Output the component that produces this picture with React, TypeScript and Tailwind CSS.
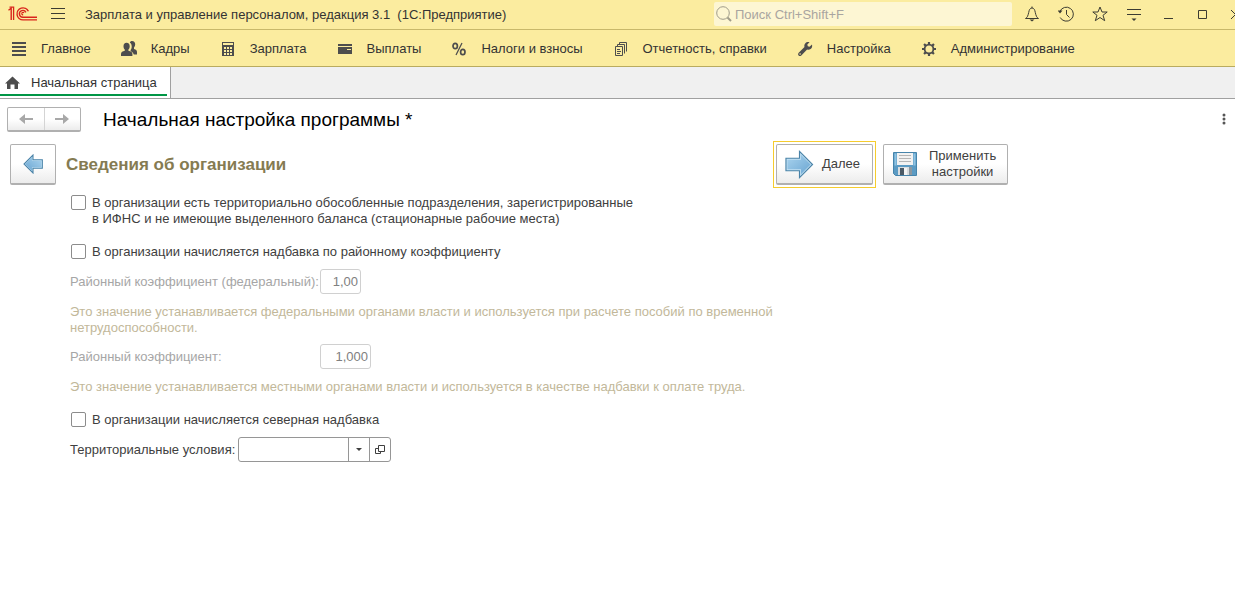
import { useState } from 'react';
import type { ReactNode } from 'react';

const ink = '#4d4d4d';

function Logo() {
  return (
    <svg width="30" height="16" viewBox="0 0 30 16" fill="none" stroke="#d9241c" strokeWidth="1.4">
      <path d="M0.5 4.2 L3.2 2.2 V14" />
      <path d="M1.5 1.2 H5.6 V14" strokeWidth="1.3" />
      <path d="M20.4 5.2 A6 6 0 1 0 15 13.9 H29" />
      <path d="M17.9 6.4 A3.4 3.4 0 1 0 15 11.2 H29" />
      <path d="M16 7 A1.2 1.2 0 1 0 15.2 8.8" strokeWidth="1.1" />
    </svg>
  );
}

function NavIcon({ children }: { children: ReactNode }) {
  return (
    <svg width="16" height="16" viewBox="0 0 16 16" fill={ink} className="shrink-0">
      {children}
    </svg>
  );
}

const sections = [
  {
    title: 'Главное',
    icon: <path d="M1 1h14v2H1zM1 5h14v2H1zM1 9h14v2H1zM1 13h14v2H1z" />,
  },
  {
    title: 'Кадры',
    icon: (
      <>
        <path d="M11 0c2.100 0 3.200 1.300 3.200 3.200 0 1.300-.4 2.300-1.200 3.200v1.600c1.900.6 3 1.300 3 3v2.500h-3.200c-.4-1.700-1.600-2.700-3.200-3.300V9c.8-1 1.100-2.200 1.100-3.600 0-1.800-.7-3.100-1.900-3.900C9.300.5 10 0 11 0z" />
        <path d="M5.600 1.800c2.100 0 3.100 1.400 3.100 3.400 0 1.500-.5 2.700-1.300 3.400v1.200c2.300.6 4 1.300 4 3.200v2H0v-2c0-1.900 1.600-2.600 3.800-3.200V8.600C3 7.900 2.500 6.700 2.500 5.200c0-2 1-3.400 3.100-3.400z" />
      </>
    ),
  },
  {
    title: 'Зарплата',
    icon: (
      <path
        fillRule="evenodd"
        d="M2 1h12v14H2zM3 2v2h10V2zM4 6v2h2V6zM7 6v2h2V6zM10 6v2h2V6zM4 9v2h2V9zM7 9v2h2V9zM10 9v2h2V9zM4 12v2h2v-2zM7 12v2h2v-2zM10 12v2h2v-2z"
      />
    ),
  },
  {
    title: 'Выплаты',
    icon: <path fillRule="evenodd" d="M1 3h14v2H1zM1 6h14v7H1zM10 8v1h4V8z" />,
  },
  {
    title: 'Налоги и взносы',
    icon: (
      <g fill="none" stroke={ink} strokeWidth="1.7">
        <ellipse cx="4.200" cy="5" rx="2.200" ry="2.700" />
        <ellipse cx="11.800" cy="11" rx="2.200" ry="2.700" />
        <path d="M11 2 5 14" strokeWidth="1.300" />
      </g>
    ),
  },
  {
    title: 'Отчетность, справки',
    icon: (
      <g fill="none" stroke={ink}>
        <path d="M2.500 5.500h7v9h-7zM4.500 5V3.500h7v9M6.500 3V1.500h7v9M4 8.500h3M4 10.500h4M4 12.500h3" />
      </g>
    ),
  },
  {
    title: 'Настройка',
    icon: (
      <path
        fillRule="evenodd"
        d="M12.500 1.200 10.300 3.600l.5 1.700 1.700.5L15 3.400c.5 2-.1 3.700-1.400 4.600-1.100.8-2.400.9-3.500.5L4.300 14.400c-.8.8-2 .8-2.700.1s-.7-1.900.1-2.700L7.500 6c-.4-1.200-.2-2.600.7-3.600 1.100-1.300 2.700-1.700 4.300-1.200zM3.100 12.200a.8.8 0 1 0 .01 1.600.8.8 0 0 0 0-1.600z"
      />
    ),
  },
  {
    title: 'Администрирование',
    icon: (
      <g fill="none" stroke={ink}>
        <circle cx="8" cy="8" r="4.400" strokeWidth="1.800" />
        <path
          strokeWidth="2.200"
          d="M8 1v2.500M8 12.500V15M1 8h2.500M12.500 8H15M3.050 3.050l1.800 1.800M11.150 11.150l1.800 1.800M3.050 12.950l1.800-1.800M11.150 4.850l1.800-1.800"
        />
      </g>
    ),
  },
];

function ToolButton({ label, children }: { label: string; children: ReactNode }) {
  return (
    <button type="button" aria-label={label} className="flex h-4 w-4 items-center justify-center">
      <svg width="16" height="16" viewBox="0 0 16 16" fill="none" stroke="#3c3c32" className="shrink-0">
        {children}
      </svg>
    </button>
  );
}

function TitleBar() {
  return (
    <header className="flex h-[30px] items-center overflow-hidden border-b border-[#c8b86a] bg-[#fbec9f] pb-px pl-2 text-[#333333]">
      <Logo />
      <button type="button" aria-label="Меню" className="ml-3 flex w-4 justify-center">
        <svg width="14" height="12" viewBox="0 0 14 12" stroke="#3c3c32">
          <path d="M0 .5h14M0 5.500h14M0 10.500h14" />
        </svg>
      </button>
      <h1 className="ml-[19px] flex-1 pt-px whitespace-pre">
        {'Зарплата и управление персоналом, редакция 3.1  (1С:Предприятие)'}
      </h1>
      <label className="flex h-6 w-[298px] shrink-0 items-center rounded-xs bg-[#fdf6d3] pl-[2px]">
        <svg width="16" height="16" viewBox="0 0 16 16" fill="none" stroke="#a09c8a" className="shrink-0">
          <circle cx="7" cy="7" r="6.300" />
          <path d="M11.500 11.500 15 15" strokeWidth="2" />
        </svg>
        <input
          type="search"
          aria-label="Поиск"
          placeholder="Поиск Ctrl+Shift+F"
          className="ml-[3px] w-full bg-transparent pt-px outline-none placeholder:text-[#a9a5a0]"
        />
      </label>
      <div className="-mr-[9px] ml-3 flex shrink-0 items-center gap-[18px]">
        <ToolButton label="Уведомления">
          <path d="M8 .5V2M1.500 12.500h13c-2-1-2.500-3-3.200-6C10.800 3.800 10 2 8 2S5.200 3.800 4.700 6.500c-.7 3-1.200 5-3.200 6z" />
          <path d="M5.500 13.500h5L8 15.500z" fill="#3c3c32" stroke="none" />
        </ToolButton>
        <ToolButton label="История">
          <path d="M1.900 5.500A7 7 0 1 1 2.200 11.500M8.500 4v4.500l3 3" />
          <path d="M-.5 4.500h5L2 7.500z" fill="#3c3c32" stroke="none" />
        </ToolButton>
        <ToolButton label="Избранное">
          <path d="M8 1l2 5h5.200l-4.200 3.300 1.700 5.400L8 11.500l-4.700 3.200L5 9.300.8 6H6z" />
        </ToolButton>
        <ToolButton label="Настройки окна">
          <path d="M1 3.500h14M1 8.500h14" />
          <path d="M5.500 12.500h5L8 15z" fill="#3c3c32" stroke="none" />
        </ToolButton>
        <ToolButton label="Свернуть">
          <path d="M4 12.500h9" />
        </ToolButton>
        <ToolButton label="Развернуть">
          <path d="M4.500 4.500h8v8h-8z" />
        </ToolButton>
        <ToolButton label="Закрыть">
          <path d="M3 4l9 9M12 4l-9 9" />
        </ToolButton>
      </div>
    </header>
  );
}

function Sections() {
  return (
    <nav className="flex h-[37px] items-center gap-[30px] overflow-hidden border-b border-[#b9ab5f] bg-[#fbec9f] pt-px pl-[11px] text-[#333333]">
      {sections.map((s) => (
        <a key={s.title} href="#" className="flex shrink-0 items-center gap-[14px]">
          <NavIcon>{s.icon}</NavIcon>
          {s.title}
        </a>
      ))}
    </nav>
  );
}

function Tabs() {
  return (
    <div className="flex h-8 border-b border-[#a0a0a0] bg-[#f0f0f0]">
      <div className="border-r border-[#a0a0a0] bg-white pr-[3px]">
        <a href="#" className="flex h-[29px] items-center gap-[10px] border-b-2 border-[#009646] pt-1 pr-[10px] pl-[5px] text-[#333333]">
          <svg width="16" height="16" viewBox="0 0 16 16" fill={ink}>
            <path d="M7.500 1.500 15 8.500h-2V14H9.500V9.500h-4V14H2V8.500H0z" />
          </svg>
          Начальная страница
        </a>
      </div>
    </div>
  );
}

const raised = 'rounded-xs border border-b-2 border-[#b0b0b0] bg-linear-to-b from-white from-50% to-[#ececec]';

function BlueArrow({ size, flip }: { size: number; flip?: boolean }) {
  return (
    <svg width={size} height={size} viewBox="0 0 30 30" className={flip ? 'shrink-0 -scale-x-100' : 'shrink-0'}>
      <defs>
        <linearGradient id="arrow" x1="0" y1="0" x2="1" y2="1">
          <stop offset="0" stopColor="#a9d3ee" />
          <stop offset="1" stopColor="#6ba6d2" />
        </linearGradient>
      </defs>
      <path d="M1 8.500h14V1.500L28.500 15 15 28.500v-7H1z" fill="#c4e2f4" stroke="#4a83a8" strokeWidth={flip ? 1.6 : 1.2} />
      <path d="M2.500 10h14V5l10 10-10 10v-5h-14z" fill="url(#arrow)" />
    </svg>
  );
}

function Floppy() {
  return (
    <svg width="24" height="24" viewBox="0 0 24 24" className="shrink-0">
      <path d="M.5.500h23v23H2.500l-2-2z" fill="#5b9bc4" stroke="#4684ab" />
      <path d="M1.500 1.500h2v12h-2zM20.500 1.500h2v12h-2z" fill="#8fc3e2" />
      <path d="M4 1h16v12H4z" fill="#f2f2f2" />
      <path d="M6 3.500h12M6 6.500h12M6 9.500h12" stroke="#b5b5b5" />
      <path d="M5 15h14v8H5z" fill="#d9dde0" />
      <path d="M7 16h4v7H7z" fill="#4c5a66" />
      <path d="M11 16h3v7h-3z" fill="#f4f4f4" />
      <path d="M16 15h3v8h-3z" fill="#8c979f" />
    </svg>
  );
}

function Check({ id, children }: { id: string; children: ReactNode }) {
  return (
    <div className="flex items-start gap-[6px] pl-px">
      <input
        id={id}
        type="checkbox"
        className="h-[15px] w-[15px] shrink-0 appearance-none rounded-xs border border-[#8c8c8c] bg-white checked:bg-[#8c8c8c]"
      />
      <label htmlFor={id}>{children}</label>
    </div>
  );
}

export default function App() {
  const [territory, setTerritory] = useState('');

  return (
    <div className="min-h-screen bg-white font-['Liberation_Sans',Arial,sans-serif] text-[13px] leading-4 text-[#404040]">
      <TitleBar />
      <Sections />
      <Tabs />

      {/* Form header */}
      <div className="flex items-center pt-2 pr-[7px] pl-[7px]">
        <div className={`flex h-[25px] w-[74px] ${raised}`}>
          <button type="button" aria-label="Назад" className="flex flex-1 items-center justify-center border-r border-[#d4d4d4]">
            <svg width="14" height="12" viewBox="0 0 14 12" fill="#a8a8a8">
              <path d="M0 6l6-5v4h8v2H6v4z" />
            </svg>
          </button>
          <button type="button" aria-label="Вперед" className="flex flex-1 items-center justify-center">
            <svg width="14" height="12" viewBox="0 0 14 12" fill="#a8a8a8">
              <path d="M14 6L8 1v4H0v2h8v4z" />
            </svg>
          </button>
        </div>
        <h2 className="ml-[22px] flex-1 text-[19px] leading-6 text-black">Начальная настройка программы *</h2>
        <button type="button" aria-label="Еще" className="flex w-2 justify-center pb-[2px]">
          <svg width="4" height="12" viewBox="0 0 4 12" fill="#555555">
            <circle cx="2" cy="2" r="1.500" />
            <circle cx="2" cy="6" r="1.500" />
            <circle cx="2" cy="10" r="1.500" />
          </svg>
        </button>
      </div>

      {/* Wizard step bar */}
      <div className="flex max-w-[1008px] items-center pt-[9px] pl-[10px]">
        <button type="button" aria-label="Предыдущий шаг" className={`flex h-[41px] w-[46px] items-center justify-center ${raised}`}>
          <BlueArrow size={20} flip />
        </button>
        <h3 className="ml-[10px] flex-1 text-[17px] leading-6 font-bold text-[#857b52]">Сведения об организации</h3>
        <div className="border border-[#f5cc2e] p-[2px]">
          <button type="button" className={`flex h-[41px] w-[97px] items-center gap-2 pl-2 ${raised}`}>
            <BlueArrow size={29} />
            Далее
          </button>
        </div>
        <button type="button" className={`ml-[7px] flex h-[41px] w-[125px] items-center gap-3 pl-[9px] ${raised}`}>
          <Floppy />
          <span>
            Применить
            <br />
            настройки
          </span>
        </button>
      </div>

      <main className="max-w-[800px] pt-[7px] pl-[70px]">
        <Check id="branches">
          В организации есть территориально обособленные подразделения, зарегистрированные
          <br />
          в ИФНС и не имеющие выделенного баланса (стационарные рабочие места)
        </Check>

        <div className="mt-[17px]">
          <Check id="district">В организации начисляется надбавка по районному коэффициенту</Check>
        </div>

        <div className="mt-[9px] flex items-center text-[#a6a6a6]">
          <label htmlFor="federal" className="w-[250px] shrink-0 whitespace-nowrap">
            Районный коэффициент (федеральный):
          </label>
          <input
            id="federal"
            disabled
            value="1,00"
            className="h-[25px] w-[41px] rounded-[3px] border border-[#d0d0d0] pr-[2px] text-right text-[#808080]"
          />
        </div>
        <p className="mt-[10px] text-[#c2b89a]">
          Это значение устанавливается федеральными органами власти и используется при расчете пособий по временной
          нетрудоспособности.
        </p>

        <div className="mt-2 flex items-center text-[#a6a6a6]">
          <label htmlFor="local" className="w-[250px] shrink-0 whitespace-nowrap">
            Районный коэффициент:
          </label>
          <input
            id="local"
            disabled
            value="1,000"
            className="h-[25px] w-[51px] rounded-[3px] border border-[#d0d0d0] pr-[2px] text-right text-[#808080]"
          />
        </div>
        <p className="mt-[10px] text-[#c2b89a]">
          Это значение устанавливается местными органами власти и используется в качестве надбавки к оплате труда.
        </p>

        <div className="mt-[17px]">
          <Check id="north">В организации начисляется северная надбавка</Check>
        </div>

        <div className="mt-[9px] flex items-center">
          <label htmlFor="territory" className="w-[168px] shrink-0 whitespace-nowrap">
            Территориальные условия:
          </label>
          <div className="flex h-[25px] w-[153px] rounded-[3px] border border-[#969696]">
            <input
              id="territory"
              value={territory}
              onChange={(e) => setTerritory(e.target.value)}
              className="min-w-0 flex-1 px-1 outline-none"
            />
            <button type="button" aria-label="Выбрать из списка" className="flex w-[21px] items-center justify-center border-l border-[#969696]">
              <svg width="6" height="3" viewBox="0 0 6 3" fill="#404040">
                <path d="M0 0h6L3 3z" />
              </svg>
            </button>
            <button type="button" aria-label="Открыть" className="flex w-[21px] items-center justify-center border-l border-[#969696]">
              <svg width="10" height="10" viewBox="0 0 10 10" fill="none" stroke="#404040">
                <path d="M3.500.500h6v6h-6zM3 3.500H.500v5h5V7" />
              </svg>
            </button>
          </div>
        </div>
      </main>
    </div>
  );
}
